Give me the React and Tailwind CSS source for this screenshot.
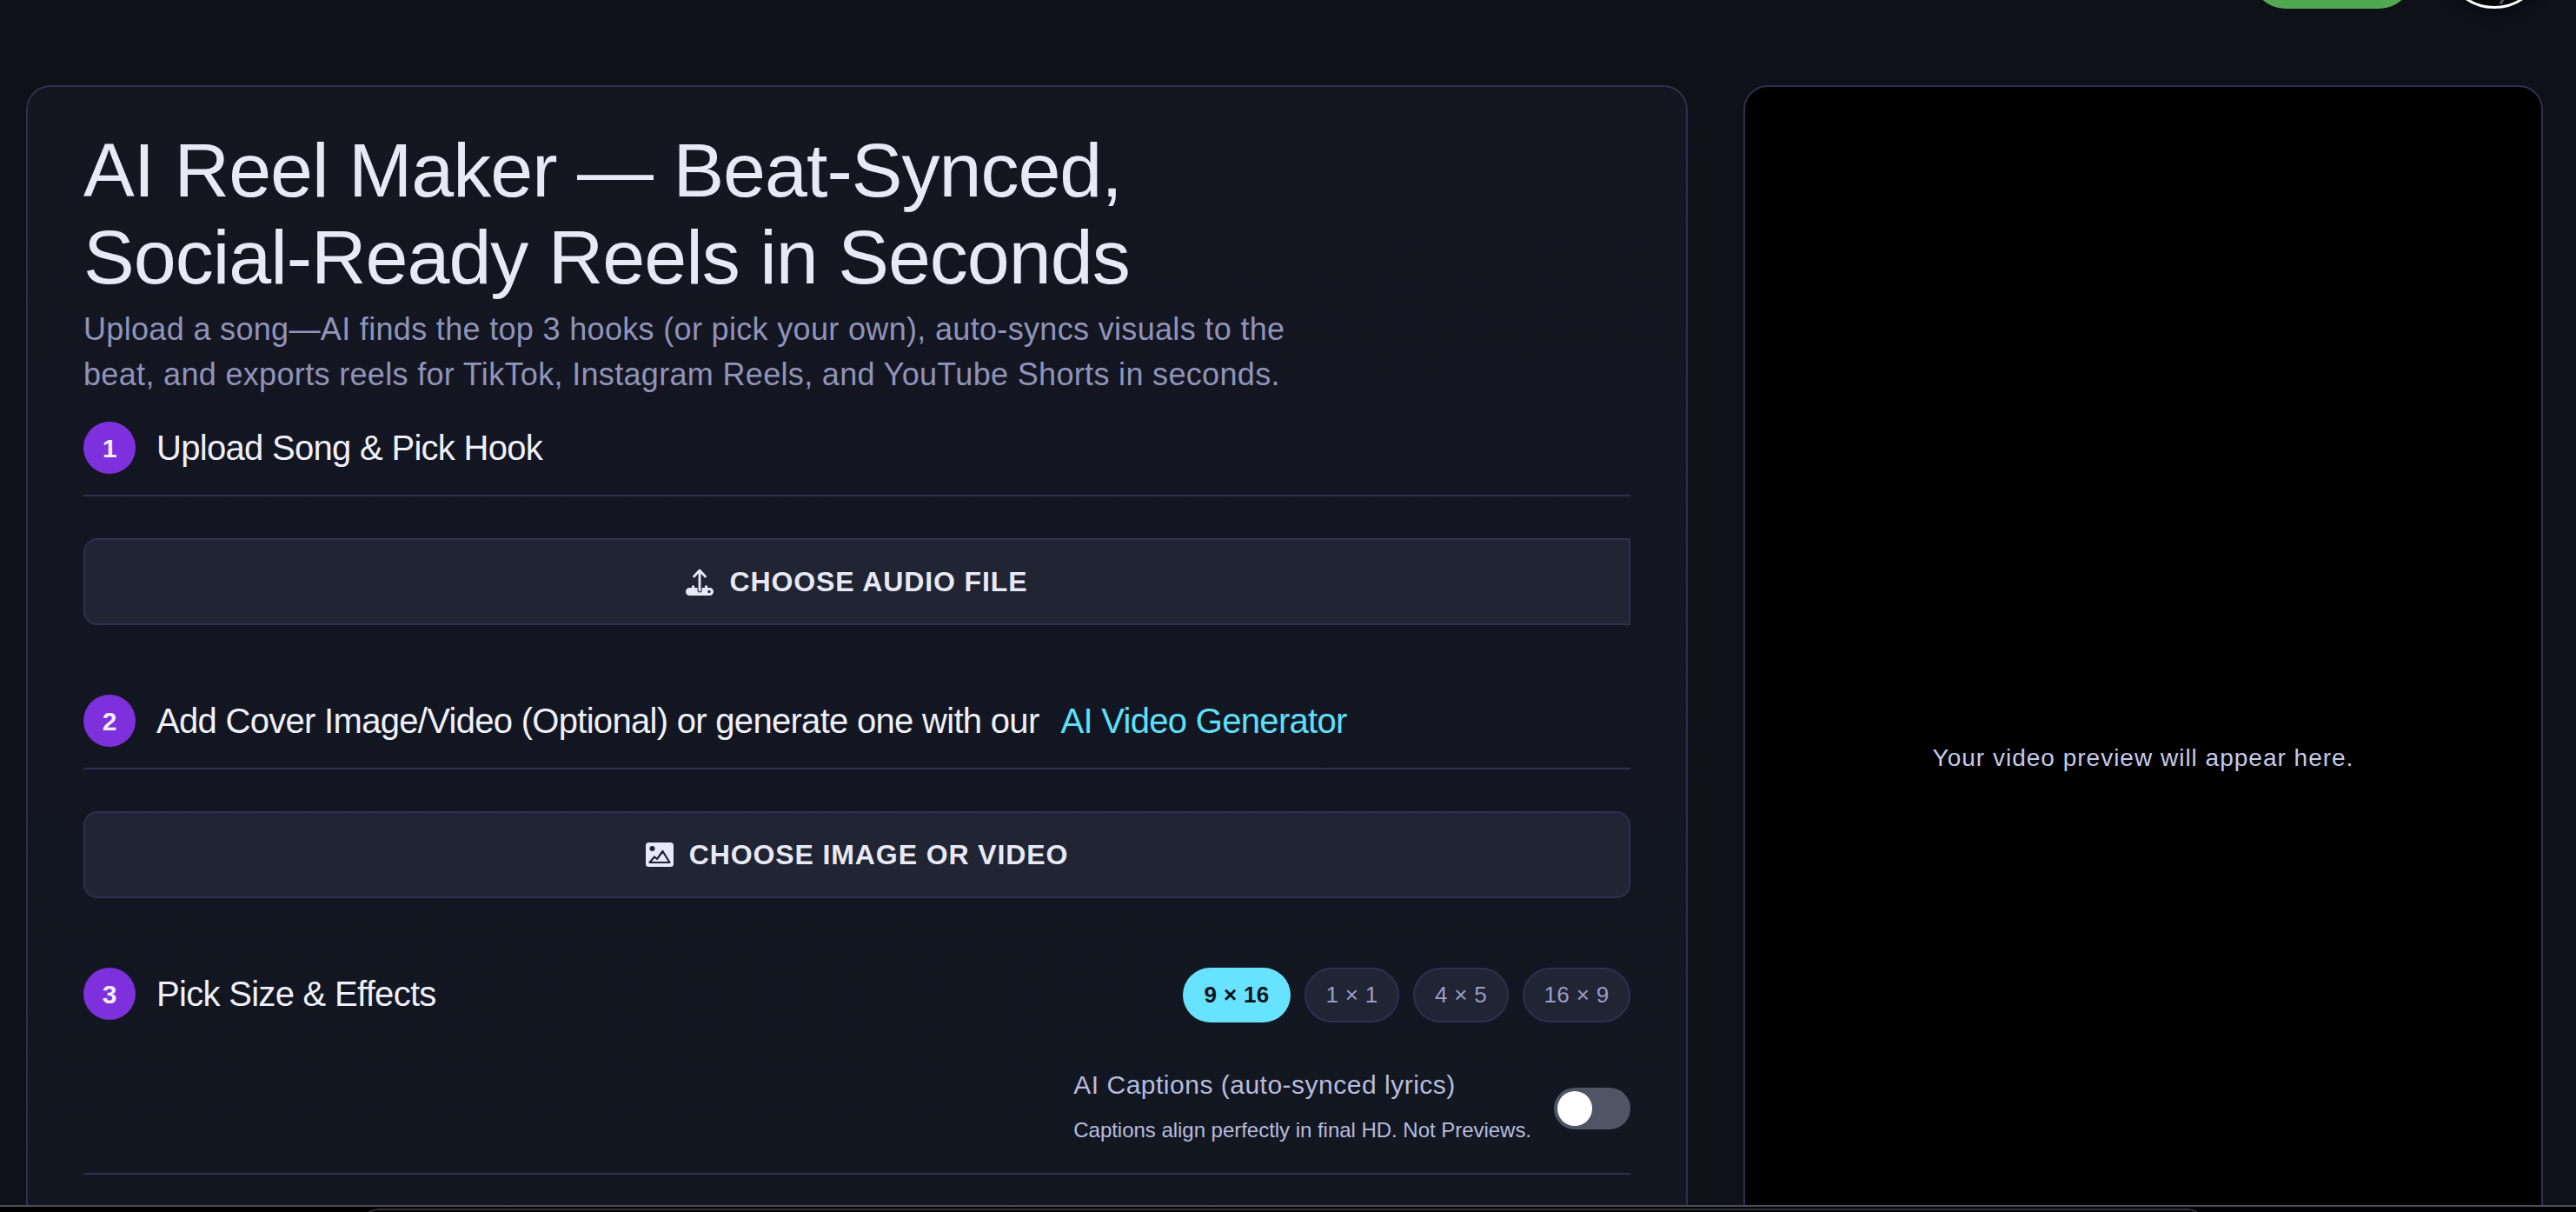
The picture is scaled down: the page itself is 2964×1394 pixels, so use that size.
const font = "font-['Liberation_Sans',Arial,sans-serif]";

function UploadIcon() {
  return (
    <svg viewBox="0 0 32 32" className="h-[32px] w-[32px] shrink-0">
      <path d="M0 27.500a4.500 4.500 0 0 1 4.500-4.500h2.500v-2.500l3 0v2.500h12v-2.500l3 0v2.500h2.500a4.500 4.500 0 0 1 0 9h-23a4.500 4.500 0 0 1-4.500-4.500z" fill="#e8e9f6" />
      <circle cx="27" cy="27.500" r="1.700" fill="#202433" />
      <path d="M16 4v22" fill="none" stroke="#202433" strokeWidth="5" strokeLinecap="round" />
      <path d="M16 3.500v22.500M9.500 10 16 3l6.500 7" fill="none" stroke="#e8e9f6" strokeWidth="2.800" strokeLinecap="round" strokeLinejoin="round" />
    </svg>
  );
}

function ImageIcon() {
  return (
    <svg viewBox="0 0 32 28" className="h-[28px] w-[32px] shrink-0">
      <rect x="0" y="0" width="32" height="28" rx="3.500" fill="#e8e9f6" />
      <circle cx="7.500" cy="7" r="3" fill="#202433" />
      <path d="M4.500 23 10 16.500l3 2.500 6.500-9L27.500 23z" fill="#e8e9f6" stroke="#202433" strokeWidth="2.200" strokeLinejoin="round" />
    </svg>
  );
}

function StepHeader({ number, children, bordered = true, right }) {
  return (
    <div className={`flex items-start ${bordered ? "border-b-2 border-[#2d3050] pb-[24px]" : ""}`}>
      <div className="flex h-[60px] w-[60px] shrink-0 items-center justify-center rounded-full bg-[#7e30dc] text-[30px] font-bold text-[#f2eefc]">
        {number}
      </div>
      <div className="ml-[24px] flex items-center text-[40px] leading-[60px] tracking-[-0.7px] text-[#eff0f9]">
        {children}
      </div>
      {right}
    </div>
  );
}

function ChooseButton({ icon, label, squareRight }) {
  return (
    <button
      className={`mt-[48px] flex h-[100px] w-full items-center justify-center gap-[18px] border-2 border-[#2d3050] bg-[#202433] text-[32px] font-bold tracking-[0.9px] text-[#e8e9f6] ${
        squareRight ? "rounded-l-[16px]" : "rounded-[16px]"
      }`}
    >
      {icon}
      {label}
    </button>
  );
}

function SizePill({ label, active, width }) {
  return (
    <div
      className={`flex h-[63px] items-center justify-center rounded-full text-[26px] tracking-[0.3px] ${width} ${
        active
          ? "bg-[#67e3ff] font-bold text-[#07121a]"
          : "border-2 border-[#2d3050] bg-[#202433] text-[#9a9dc4]"
      }`}
    >
      {label}
    </div>
  );
}

export default function App() {
  return (
    <div className={`h-[1394px] w-[2964px] overflow-hidden bg-[#0e1118] ${font}`}>
      {/* top of the nav, scrolled away */}
      <div className="flex h-[98px] items-start justify-end gap-[34px] overflow-hidden pr-[35px]">
        <div className="-mt-[70px] h-[80px] w-[187px] rounded-[40px] bg-[#52a852]" />
        <div className="relative -mt-[108px] h-[118px] w-[118px] overflow-hidden rounded-full border-[3px] border-white bg-[#060607] shadow-[0_2px_14px_4px_rgba(0,0,0,0.35)]">
          <div className="absolute bottom-[2px] left-[63px] h-[6px] w-[3px] rotate-[30deg] bg-[#55565a]" />
        </div>
      </div>

      <div className="flex h-[1288px] items-start gap-[64px] overflow-hidden pl-[30px]">
        {/* form panel */}
        <div className="h-[1544px] w-[1912px] shrink-0 rounded-[28px] border-2 border-[#2d3050] bg-gradient-to-b from-[#141622] to-[#121722] px-[64px] pt-[46px]">
          <h1 className="text-[88px] leading-[100px] tracking-[-1px] text-[#e8e9f6]">
            AI Reel Maker — Beat-Synced,
            <br />
            Social-Ready Reels in Seconds
          </h1>
          <p className="mt-[7px] text-[36px] leading-[52px] tracking-[0.33px] text-[#9094b8]">
            Upload a song—AI finds the top 3 hooks (or pick your own), auto-syncs visuals to the
            <br />
            beat, and exports reels for TikTok, Instagram Reels, and YouTube Shorts in seconds.
          </p>

          <div className="mt-[28px]">
            <StepHeader number="1">Upload Song &amp; Pick Hook</StepHeader>
            <ChooseButton icon={<UploadIcon />} label="CHOOSE AUDIO FILE" squareRight />
          </div>

          <div className="mt-[80px]">
            <StepHeader number="2">
              Add Cover Image/Video (Optional) or generate one with our
              <span className="ml-[25px] text-[#5ee0fa]">AI Video Generator</span>
            </StepHeader>
            <ChooseButton icon={<ImageIcon />} label="CHOOSE IMAGE OR VIDEO" />
          </div>

          <div className="mt-[80px]">
            <StepHeader
              number="3"
              bordered={false}
              right={
                <div className="ml-auto flex gap-[16px]">
                  <SizePill label="9 × 16" active width="w-[124px]" />
                  <SizePill label="1 × 1" width="w-[109px]" />
                  <SizePill label="4 × 5" width="w-[110px]" />
                  <SizePill label="16 × 9" width="w-[124px]" />
                </div>
              }
            >
              Pick Size &amp; Effects
            </StepHeader>
            <div className="flex items-center justify-end gap-[26px] border-b-2 border-[#2d3050] pb-[33px] pt-[52px]">
              <div>
                <div className="text-[30px] leading-[40px] tracking-[0.5px] text-[#b8bcdc]">AI Captions (auto-synced lyrics)</div>
                <div className="mt-[16px] text-[24px] leading-[32px] tracking-[-0.03px] text-[#b8bcdc]">
                  Captions align perfectly in final HD. Not Previews.
                </div>
              </div>
              <div className="mt-[6px] flex h-[48px] w-[88px] items-center rounded-full bg-[#4f5565] pl-[4px]">
                <div className="h-[40px] w-[40px] rounded-full bg-white" />
              </div>
            </div>
          </div>
        </div>

        {/* preview */}
        <div className="flex h-[1548px] w-[920px] shrink-0 items-center justify-center rounded-[28px] border-2 border-[#2d3050] bg-black">
          <span className="text-[28px] tracking-[1px] text-[#c5cae9]">Your video preview will appear here.</span>
        </div>
      </div>

      {/* next window edge */}
      <div className="h-[8px] overflow-hidden border-t-2 border-[#4a4d5a] bg-black pl-[416px] pt-[2px]">
        <div className="h-[20px] w-[2121px] rounded-t-[20px] border-t-2 border-[#333438]" />
      </div>
    </div>
  );
}
